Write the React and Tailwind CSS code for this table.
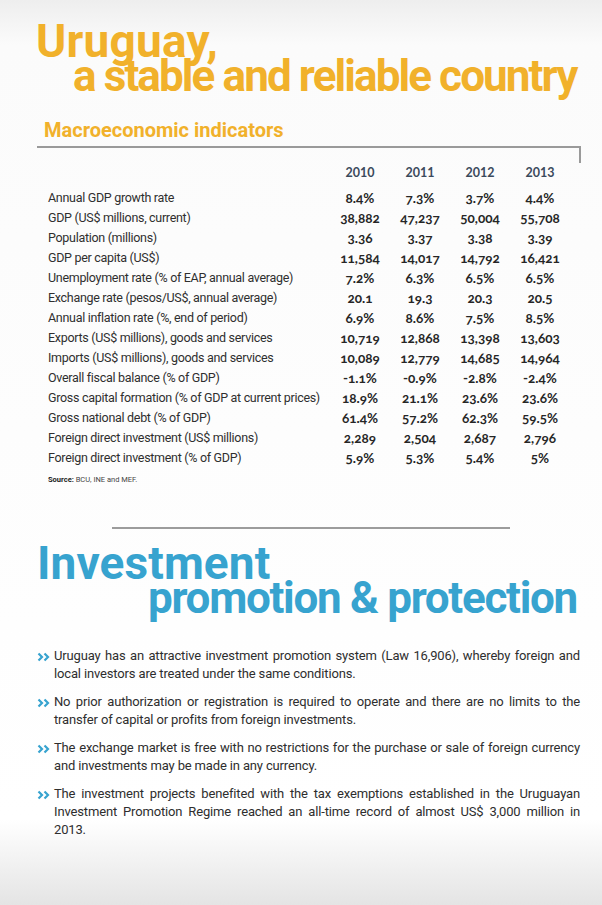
const rows = [
  ["Annual GDP growth rate", "8.4%", "7.3%", "3.7%", "4.4%"],
  ["GDP (US$ millions, current)", "38,882", "47,237", "50,004", "55,708"],
  ["Population (millions)", "3.36", "3.37", "3.38", "3.39"],
  ["GDP per capita (US$)", "11,584", "14,017", "14,792", "16,421"],
  ["Unemployment rate (% of EAP, annual average)", "7.2%", "6.3%", "6.5%", "6.5%"],
  ["Exchange rate (pesos/US$, annual average)", "20.1", "19.3", "20.3", "20.5"],
  ["Annual inflation rate (%, end of period)", "6.9%", "8.6%", "7.5%", "8.5%"],
  ["Exports (US$ millions), goods and services", "10,719", "12,868", "13,398", "13,603"],
  ["Imports (US$ millions), goods and services", "10,089", "12,779", "14,685", "14,964"],
  ["Overall fiscal balance (% of GDP)", "-1.1%", "-0.9%", "-2.8%", "-2.4%"],
  ["Gross capital formation (% of GDP at current prices)", "18.9%", "21.1%", "23.6%", "23.6%"],
  ["Gross national debt (% of GDP)", "61.4%", "57.2%", "62.3%", "59.5%"],
  ["Foreign direct investment (US$ millions)", "2,289", "2,504", "2,687", "2,796"],
  ["Foreign direct investment (% of GDP)", "5.9%", "5.3%", "5.4%", "5%"],
];

const bullets = [
  "Uruguay has an attractive investment promotion system (Law 16,906), whereby foreign and local investors are treated under the same conditions.",
  "No prior authorization or registration is required to operate and there are no limits to the transfer of capital or profits from foreign investments.",
  "The exchange market is free with no restrictions for the purchase or sale of foreign currency and investments may be made in any currency.",
  "The investment projects benefited with the tax exemptions established in the Uruguayan Investment Promotion Regime reached an all-time record of almost US$ 3,000 million in 2013.",
];

const Chevrons = () => (
  <svg width="13" height="10" viewBox="0 0 13 10" className="mt-[5px]">
    <path d="M1.5 1.5 L5 5 L1.5 8.5 M7.5 1.5 L11 5 L7.5 8.5" fill="none" stroke="#37a3cf" strokeWidth="2.2" />
  </svg>
);

export default function App() {
  return (
    <div className="w-[602px] min-h-[905px] overflow-hidden bg-[linear-gradient(to_bottom,#eeeeee_0px,#fbfbfb_45px,#ffffff_820px,#e4e4e4_905px)] font-['Roboto',sans-serif] text-[#333]">
      {/* title */}
      <h1 className="pt-[24px] pl-[36px] font-bold leading-[35px] text-[#f1b12b] whitespace-nowrap">
        <span className="block text-[46px] tracking-[0.2px]">Uruguay,</span>
        <span className="block pl-[37px] text-[44px] tracking-[-1.9px]">a stable and reliable country</span>
      </h1>

      <h2 className="mt-[25px] pl-[44px] text-[20px] font-bold leading-[22px] text-[#f1b12b]">
        Macroeconomic indicators
      </h2>

      <div className="mt-[5px] ml-[37px] w-[544px] h-[17px] border-t-2 border-r-2 border-[#9a9a9a]" />

      {/* table */}
      <div className="ml-[48px] grid grid-cols-[282px_60px_60px_60px_60px] text-[12.5px]">
        <div className="h-[20px]" />
        {["2010", "2011", "2012", "2013"].map((y) => (
          <div
            key={y}
            className="h-[20px] text-center font-['Lato',sans-serif] font-bold leading-[20px] text-[#3b4a5c]"
          >
            {y}
          </div>
        ))}
        <div className="col-span-5 h-[5px]" />
        {rows.map((r) => (
          <>
            <div key={r[0]} className="h-[20px] leading-[20px] tracking-[-0.3px] whitespace-nowrap text-[#2f2f2f]">
              {r[0]}
            </div>
            {r.slice(1).map((v, i) => (
              <div
                key={r[0] + i}
                className="h-[20px] text-center font-['Lato',sans-serif] text-[13.5px] font-bold leading-[20px] text-[#262626] oldstyle-nums"
              >
                {v}
              </div>
            ))}
          </>
        ))}
      </div>

      <p className="mt-[7px] ml-[48px] text-[7.5px] leading-[10px] text-[#444]">
        <span className="font-bold text-[#222]">Source:</span> BCU, INE and MEF.
      </p>

      <div className="mt-[42px] ml-[112px] w-[398px] h-[2px] bg-[#9c9c9c]" />

      {/* investment */}
      <h1 className="mt-[17px] pl-[37px] font-bold leading-[35px] text-[#37a3cf] whitespace-nowrap">
        <span className="block text-[46px] tracking-[0.1px]">Investment</span>
        <span className="block pl-[111px] text-[44px] tracking-[-1.3px]">promotion &amp; protection</span>
      </h1>

      <div className="mt-[31px] pl-[37px] pr-[22px] flex flex-col gap-[10px]">
        {bullets.map((b) => (
          <div key={b} className="flex">
            <span className="w-[17px] shrink-0">
              <Chevrons />
            </span>
            <p className="text-[13px] leading-[18px] tracking-[-0.15px] text-justify text-[#2e2e2e]">{b}</p>
          </div>
        ))}
      </div>
    </div>
  );
}
